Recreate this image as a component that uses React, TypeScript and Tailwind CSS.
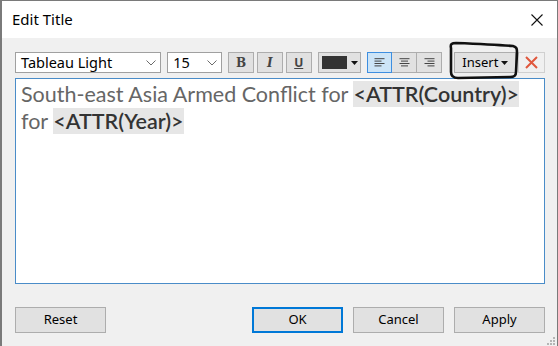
import React from 'react';

const ui = { fontFamily: '"Noto Sans", "Open Sans", sans-serif' };
const editorFont = { fontFamily: 'Lato, "Open Sans", sans-serif' };

function Chevron() {
  return (
    <svg width="10" height="6" viewBox="0 0 10 6" className="shrink-0">
      <path d="M0.5 0.5 L5 5 L9.5 0.5" fill="none" stroke="#6b6b6b" strokeWidth="1" />
    </svg>
  );
}

function Caret() {
  return (
    <svg width="7" height="4" viewBox="0 0 7 4" className="shrink-0">
      <path d="M0 0 H7 L3.5 4 Z" fill="#111" />
    </svg>
  );
}

function AlignIcon({ kind }: { kind: 'left' | 'center' | 'right' }) {
  const rows = [10, 7, 10, 7];
  return (
    <svg width="11" height="9" viewBox="0 0 11 9">
      {rows.map((w, i) => {
        const x = kind === 'left' ? 0.5 : kind === 'center' ? (11 - w) / 2 : 10.5 - w;
        return <line key={i} x1={x} x2={x + w} y1={i * 2.4 + 0.7} y2={i * 2.4 + 0.7} stroke="#444" strokeWidth="1" />;
      })}
    </svg>
  );
}

function ToolButton({ children, className = '' }: { children: React.ReactNode; className?: string }) {
  return (
    <div className={`h-[21px] w-[26px] flex items-center justify-center border border-[#adadad] bg-[#e1e1e1] ${className}`}>
      {children}
    </div>
  );
}

function DialogButton({ label, primary = false }: { label: string; primary?: boolean }) {
  return (
    <div
      className={`w-[91px] h-[26px] flex items-center justify-center bg-[#e1e1e1] text-[13px] text-black ${
        primary ? 'border-2 border-[#0078d7]' : 'border border-[#adadad]'
      }`}
    >
      {label}
    </div>
  );
}

export default function App() {
  return (
    <div className="relative w-[558px] h-[346px] overflow-hidden bg-[#f0f0f0]" style={ui}>
      <div className="flex flex-col w-full h-full border-l-2 border-r border-t border-[#7a7a7a]">
        {/* title bar */}
        <div className="h-[37px] bg-white flex items-center justify-between pl-[10px] pr-[14px] shrink-0">
          <span className="text-[15px] text-black">Edit Title</span>
          <svg width="12" height="12" viewBox="0 0 12 12">
            <path d="M0.5 0.5 L11.5 11.5 M11.5 0.5 L0.5 11.5" stroke="#111" strokeWidth="1.1" />
          </svg>
        </div>

        {/* body */}
        <div className="flex-1 flex flex-col pl-[13px] pr-[12px] pt-[14px]">
          {/* toolbar */}
          <div className="flex items-center h-[21px]">
            <div className="w-[147px] h-[21px] flex items-center justify-between bg-white border border-[#a0a0a0] pl-[5px] pr-[4px]">
              <span className="text-[14.5px] text-black leading-none">Tableau Light</span>
              <Chevron />
            </div>
            <div className="ml-[6px] w-[55px] h-[21px] flex items-center justify-between bg-white border border-[#a0a0a0] pl-[5px] pr-[4px]">
              <span className="text-[14.5px] text-black leading-none">15</span>
              <Chevron />
            </div>
            <ToolButton className="ml-[6px]">
              <span className="text-[12px] font-bold text-[#444]" style={{ fontFamily: '"DejaVu Serif", serif' }}>B</span>
            </ToolButton>
            <ToolButton className="ml-[3px]">
              <span className="text-[12px] font-bold italic text-[#444]" style={{ fontFamily: '"DejaVu Serif", serif' }}>I</span>
            </ToolButton>
            <ToolButton className="ml-[3px]">
              <span className="text-[12px] font-bold underline text-[#444]">U</span>
            </ToolButton>
            <div className="ml-[6px] w-[44px] h-[21px] flex items-center gap-[4px] pl-[3px] border border-[#adadad] bg-[#e1e1e1]">
              <div className="w-[25px] h-[13px] bg-[#333333]" />
              <Caret />
            </div>
            <div className="ml-[6px] flex">
              <div className="h-[21px] w-[25px] flex items-center justify-center border border-[#3d8ee0] bg-[#cce4f7]">
                <AlignIcon kind="left" />
              </div>
              <div className="h-[21px] w-[25px] flex items-center justify-center border-y border-r border-[#adadad] bg-[#e1e1e1]">
                <AlignIcon kind="center" />
              </div>
              <div className="h-[21px] w-[25px] flex items-center justify-center border-y border-r border-[#adadad] bg-[#e1e1e1]">
                <AlignIcon kind="right" />
              </div>
            </div>
            <div className="ml-[12px] w-[62px] h-[21px] flex items-center justify-center gap-[3px] border border-[#adadad] bg-[#e1e1e1]">
              <span className="text-[13px] text-black leading-none">Insert</span>
              <Caret />
            </div>
            <div className="ml-[2px] h-[21px] w-[27px] flex items-center justify-center border border-[#d0d0d0] bg-[#f0f0f0]">
              <svg width="13" height="13" viewBox="0 0 13 13">
                <path d="M1 1 L12 12 M12 1 L1 12" stroke="#e0573d" strokeWidth="2" />
              </svg>
            </div>
          </div>

          {/* editor */}
          <div
            className="mt-[5px] w-[530px] h-[206px] bg-white border border-[#4a8cc8] pl-[5px] pt-[2px] text-[21.5px] leading-[27px] text-[#666]"
            style={editorFont}
          >
            South-east Asia Armed Conflict for{' '}
            <span className="bg-[#e6e6e6] text-[#333] font-semibold">&lt;ATTR(Country)&gt;</span>
            <br />
            for <span className="bg-[#e6e6e6] text-[#333] font-semibold">&lt;ATTR(Year)&gt;</span>
          </div>

          {/* dialog buttons */}
          <div className="mt-[23px] flex items-center">
            <DialogButton label="Reset" />
            <div className="ml-auto flex items-center gap-[10px]">
              <DialogButton label="OK" primary />
              <DialogButton label="Cancel" />
              <DialogButton label="Apply" />
            </div>
          </div>
        </div>
      </div>

      {/* hand-drawn annotation around Insert */}
      <svg className="absolute left-0 top-0 pointer-events-none" width="558" height="346" viewBox="0 0 558 346">
        <path
          d="M451 48 C450 44, 452 43, 456 43 C480 44, 500 45, 513 46 C517 47, 517 49, 517 53 L516 72 C516 76, 514 77, 510 77 L458 78 C453 78, 451 76, 451 72 Z"
          fill="none"
          stroke="#111"
          strokeWidth="2.6"
          strokeLinejoin="round"
        />
        {/* resize grip */}
        {[
          [553, 337],
          [550, 340],
          [553, 340],
          [547, 343],
          [550, 343],
          [553, 343],
        ].map(([x, y], i) => (
          <rect key={i} x={x} y={y} width="2" height="2" fill="#b5b5b5" />
        ))}
      </svg>
    </div>
  );
}
